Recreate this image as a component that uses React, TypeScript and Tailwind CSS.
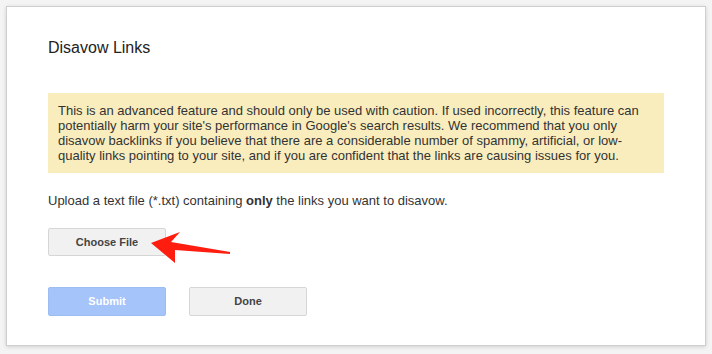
export default function App() {
  return (
    <div className="min-h-screen w-[712px] h-[354px] bg-[#f4f4f4] p-[6px] font-['Liberation_Sans',Arial,sans-serif]">
      <div className="relative w-[700px] h-[340px] bg-white border border-[#cfcfcf] shadow-[0_1px_4px_rgba(0,0,0,0.15)] px-[41px] pt-[31px]">
        <h2 className="text-[16px] leading-[20px] text-[#222]">Disavow Links</h2>

        <div className="mt-[35px] w-[616px] bg-[#f9edbe] px-[10px] py-[10px] text-[13px] leading-[15px] text-[#333]">
          This is an advanced feature and should only be used with caution. If used incorrectly, this feature can
          <br />
          potentially harm your site's performance in Google's search results. We recommend that you only
          <br />
          disavow backlinks if you believe that there are a considerable number of spammy, artificial, or low-
          <br />
          quality links pointing to your site, and if you are confident that the links are causing issues for you.
        </div>

        <p className="mt-[20px] text-[13px] leading-[15px] text-[#333]">
          Upload a text file (*.txt) containing <b>only</b> the links you want to disavow.
        </p>

        <div className="relative mt-[20px] h-[28px]">
          <button className="w-[118px] h-[28px] bg-[#f1f1f1] border border-[#d6d6d6] rounded-[2px] text-[11px] font-bold text-[#444]">
            Choose File
          </button>
          <svg
            className="absolute left-[102px] top-[1px]"
            width="82"
            height="36"
            viewBox="0 0 82 36"
          >
            <polygon
              points="1,14 30,3 21,13 80,23 80,25 25,21 25,34"
              fill="#ff1d10"
            />
          </svg>
        </div>

        <div className="mt-[31px] flex gap-[23px]">
          <button className="w-[118px] h-[29px] bg-[#a5c4f9] border border-[#9cbdf4] rounded-[2px] text-[11px] font-bold text-white">
            Submit
          </button>
          <button className="w-[118px] h-[29px] bg-[#f1f1f1] border border-[#d6d6d6] rounded-[2px] text-[11px] font-bold text-[#444]">
            Done
          </button>
        </div>
      </div>
    </div>
  );
}
